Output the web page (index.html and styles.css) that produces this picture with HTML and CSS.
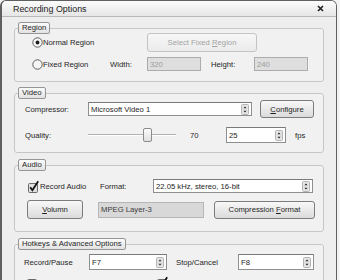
FILE: index.html
```html
<!DOCTYPE html>
<html>
<head>
<meta charset="utf-8">
<title>Recording Options</title>
<link rel="stylesheet" href="styles.css">
</head>
<body>
<div class="window">
  <div class="titlebar">
    <span class="title">Recording Options</span>
    <svg class="close" width="7" height="7" viewBox="0 0 7 7"><path d="M1 1L6 6M6 1L1 6" stroke="#1d1d1d" stroke-width="1.6"/></svg>
  </div>
  <div class="client">
    <fieldset class="group">
      <legend class="legend">Region</legend>
      <div class="body body-region">
        <div class="row r-normal">
          <label class="opt opt-normal"><svg class="radio" width="11" height="11" viewBox="0 0 11 11"><circle cx="5.5" cy="5.5" r="4.7" fill="#f6f6f6" stroke="#5e5e5e"/><circle cx="5.5" cy="5.5" r="1.9" fill="#1f1f1f"/></svg>Normal Region</label>
          <div class="btn disabled btn-select"><span>Select Fixed <u>R</u>egion</span></div>
        </div>
        <div class="row r-fixed">
          <label class="opt opt-fixed"><svg class="radio" width="11" height="11" viewBox="0 0 11 11"><circle cx="5.5" cy="5.5" r="4.7" fill="#f6f6f6" stroke="#5e5e5e"/></svg>Fixed Region</label>
          <span class="lbl-width">Width:</span>
          <div class="field disabled in-size">320</div>
          <span class="lbl-height">Height:</span>
          <div class="field disabled in-size">240</div>
        </div>
      </div>
    </fieldset>

    <fieldset class="group g-video">
      <legend class="legend">Video</legend>
      <div class="body body-video">
        <div class="row r-comp">
          <span class="lbl-v">Compressor:</span>
          <div class="field dd-comp"><span>Microsoft Video 1</span><svg class="arrows" width="8" height="11" viewBox="0 0 8 11"><rect x=".5" y=".5" width="7" height="10" rx="1" fill="#e4e4e4" stroke="#b4b4b4"/><path d="M2.5 4.3L4 2.5L5.5 4.3Z M2.5 6.7L4 8.5L5.5 6.7Z" fill="#222"/></svg></div>
          <div class="btn btn-config"><span><u>C</u>onfigure</span></div>
        </div>
        <div class="row r-qual">
          <span class="lbl-v">Quality:</span>
          <div class="slider"><div class="track"></div><div class="thumb"></div></div>
          <span class="val">70</span>
          <div class="field spin-fps"><span>25</span><svg class="arrows" width="8" height="11" viewBox="0 0 8 11"><rect x=".5" y=".5" width="7" height="10" rx="1" fill="#e4e4e4" stroke="#b4b4b4"/><path d="M2.5 4.3L4 2.5L5.5 4.3Z M2.5 6.7L4 8.5L5.5 6.7Z" fill="#222"/></svg></div>
          <span class="unit">fps</span>
        </div>
      </div>
    </fieldset>

    <fieldset class="group g-audio">
      <legend class="legend">Audio</legend>
      <div class="body body-audio">
        <div class="row r-rec">
          <label class="opt chk-rec"><svg class="check" width="12" height="13" viewBox="0 0 12 13"><rect x=".5" y="3.5" width="9" height="9" rx="1" fill="#dedede" stroke="#6a6a6a"/><path d="M2.2 7.2L4.4 10.2L10.2 1.2" fill="none" stroke="#121212" stroke-width="1.8"/></svg>Record Audio</label>
          <span class="lbl-format">Format:</span>
          <div class="field dd-format"><span>22.05 kHz, stereo, 16-bit</span><svg class="arrows" width="8" height="11" viewBox="0 0 8 11"><rect x=".5" y=".5" width="7" height="10" rx="1" fill="#e4e4e4" stroke="#b4b4b4"/><path d="M2.5 4.3L4 2.5L5.5 4.3Z M2.5 6.7L4 8.5L5.5 6.7Z" fill="#222"/></svg></div>
        </div>
        <div class="row r-vol">
          <div class="btn btn-vol"><span><u>V</u>olumn</span></div>
          <div class="mpeg">MPEG Layer-3</div>
          <div class="btn btn-compr"><span>Compression <u>F</u>ormat</span></div>
        </div>
      </div>
    </fieldset>

    <fieldset class="group g-hot">
      <legend class="legend">Hotkeys &amp; Advanced Options</legend>
      <div class="body body-hot">
        <div class="row r-keys">
          <span class="lbl-rec">Record/Pause</span>
          <div class="field spin-f7"><span>F7</span><svg class="arrows" width="8" height="11" viewBox="0 0 8 11"><rect x=".5" y=".5" width="7" height="10" rx="1" fill="#e4e4e4" stroke="#b4b4b4"/><path d="M2.5 4.3L4 2.5L5.5 4.3Z M2.5 6.7L4 8.5L5.5 6.7Z" fill="#222"/></svg></div>
          <span class="lbl-stop">Stop/Cancel</span>
          <div class="field spin-f8"><span>F8</span><svg class="arrows" width="8" height="11" viewBox="0 0 8 11"><rect x=".5" y=".5" width="7" height="10" rx="1" fill="#e4e4e4" stroke="#b4b4b4"/><path d="M2.5 4.3L4 2.5L5.5 4.3Z M2.5 6.7L4 8.5L5.5 6.7Z" fill="#222"/></svg></div>
        </div>
        <div class="row r-checks">
          <label class="opt chk-left"><svg class="check" width="12" height="13" viewBox="0 0 12 13"><rect x=".5" y="3.5" width="9" height="9" rx="1" fill="#dedede" stroke="#6a6a6a"/></svg>Auto pan</label>
          <label class="opt chk-right"><svg class="check" width="12" height="13" viewBox="0 0 12 13"><rect x=".5" y="3.5" width="9" height="9" rx="1" fill="#dedede" stroke="#6a6a6a"/><path d="M2.2 7.2L4.4 10.2L10.2 1.2" fill="none" stroke="#121212" stroke-width="1.8"/></svg>Record Cursor</label>
        </div>
      </div>
    </fieldset>
  </div>
</div>
</body>
</html>
```

FILE: styles.css
```css
* { box-sizing: border-box; }
html, body { margin: 0; height: 100%; overflow: hidden; }
body {
  background: #f3f3f3;
  font-family: "Liberation Sans", Arial, sans-serif;
  font-size: 7.7px;
  color: #1e1e1e;
}
.window {
  width: 337px;
  height: 300px;
  border: 1px solid #606060;
  border-left-width: 2px;
  border-radius: 6px 6px 0 0;
  background: #eeeeee;
  overflow: hidden;
  display: flex;
  flex-direction: column;
}
.titlebar {
  height: 16px;
  flex: none;
  display: flex;
  align-items: center;
  justify-content: space-between;
  padding: 0 12px 0 11px;
  background: linear-gradient(#fbfbfb, #e6e6e6);
  border-bottom: 1px solid #b9b9b9;
  font-size: 8.9px;
  color: #222;
}
.client {
  padding: 5px 12px 0 12px;
  display: flex;
  flex-direction: column;
}
.group {
  margin: 0;
  padding: 0;
  min-width: 0;
  border: 1px solid #c6c6c6;
  border-radius: 3px;
  background: #f1f1f1;
}
.g-video { margin-top: 5px; }
.g-audio { margin-top: 6px; }
.g-hot { margin-top: 6px; }
.legend {
  margin-left: 3px;
  padding: 0 3px;
  height: 12px;
  line-height: 10px;
  border: 1px solid #969696;
  border-radius: 2px;
  background: linear-gradient(#fbfbfb, #e2e2e2);
  color: #1e1e1e;
}
.row { display: flex; align-items: center; }
.opt { display: flex; align-items: center; white-space: nowrap; }
.field {
  display: flex;
  align-items: center;
  justify-content: space-between;
  background: #fff;
  border: 1px solid #8f8f8f;
  border-top-color: #7a7a7a;
  padding: 0 2px 0 2px;
  white-space: nowrap;
}
.field.disabled {
  background: #dedede;
  border-color: #acacac;
  color: #9c9c9c;
}
.arrows { flex: none; }
.btn {
  display: flex;
  align-items: center;
  justify-content: center;
  border: 1px solid #7c7c7c;
  border-radius: 3px;
  background: linear-gradient(#f8f8f8, #dbdbdb);
  white-space: nowrap;
}
.btn.disabled {
  border-color: #c4c4c4;
  background: linear-gradient(#f7f7f7, #ebebeb);
  color: #a3a3a3;
}

/* Region */
.body-region { padding: 0 0 10px 17px; margin-top: -1px; }
.r-normal { height: 19px; }
.r-fixed { height: 14px; margin-top: 5px; }
.opt-normal { width: 115px; }
.opt-fixed { width: 78px; }
.btn-select { width: 110px; height: 19px; }
.lbl-width { width: 37px; }
.in-size { width: 54px; height: 14px; }
.lbl-height { width: 43px; margin-left: 10px; }

/* Video */
.body-video { padding: 1px 0 9px 10px; }
.r-comp { height: 18px; }
.r-qual { height: 16px; margin-top: 9px; }
.lbl-v { width: 63px; }
.dd-comp { width: 164px; height: 14px; }
.btn-config { width: 54px; height: 18px; margin-left: 8px; }
.slider { width: 88px; height: 16px; position: relative; }
.track {
  position: absolute;
  left: 0; right: 0; top: 7px;
  height: 2px;
  background: #b3b3b3;
  border-bottom: 1px solid #fff;
}
.thumb {
  position: absolute;
  left: 55px; top: 1px;
  width: 9px; height: 14px;
  border: 1px solid #8c8c8c;
  border-radius: 2px;
  background: linear-gradient(#fdfdfd, #e0e0e0);
}
.val { margin-left: 14px; width: 36px; }
.spin-fps { width: 60px; height: 16px; }
.unit { margin-left: 9px; }

/* Audio */
.body-audio { padding: 8px 0 12px 13px; }
.r-rec { height: 14px; }
.chk-rec { width: 72px; }
.lbl-format { width: 53px; }
.dd-format { width: 160px; height: 14px; }
.r-vol { height: 19px; margin-top: 7px; }
.btn-vol { width: 56px; height: 19px; margin-left: -1px; }
.mpeg {
  width: 106px; height: 16px;
  margin-left: 15px;
  padding: 2px 0 0 2px;
  background: #d8d8d8;
  border: 1px solid #b6b6b6;
  color: #3a3a3a;
}
.btn-compr { width: 101px; height: 18px; margin-left: 10px; }

/* Hotkeys */
.body-hot { padding: 4px 0 0 9px; }
.r-keys { height: 16px; }
.lbl-rec { width: 65px; }
.spin-f7 { width: 78px; height: 16px; }
.lbl-stop { width: 62px; margin-left: 9px; }
.spin-f8 { width: 76px; height: 16px; }
.r-checks { margin-top: 6px; align-items: flex-start; }
.chk-left { margin-left: 3px; width: 130px; }
.check { flex: none; }
```
